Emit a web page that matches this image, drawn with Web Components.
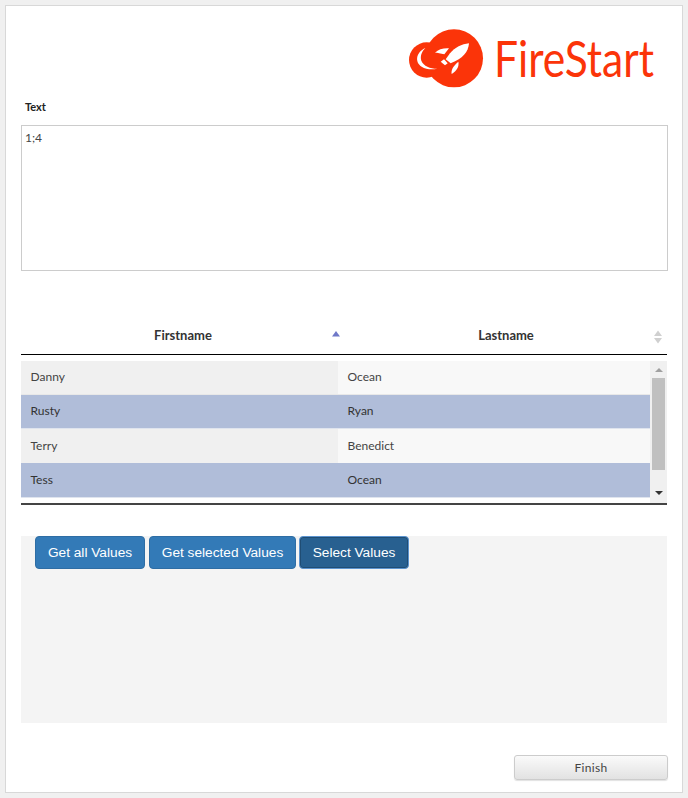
<!DOCTYPE html>
<html>
<head>
<meta charset="utf-8">
<title>FireStart</title>
<style>
  html, body { margin: 0; padding: 0; background: #f0f0f0; }
  body { padding: 5px; font-family: Lato, "Liberation Sans", sans-serif; color: #333; }
</style>
</head>
<body>

<template id="fs-logo-tpl">
  <style>
    :host { display: flex; justify-content: flex-end; align-items: center; height: 75px; padding-right: 15px; }
    svg { width: 90px; height: 75px; display: block; }
    .name {
      width: 158px; height: 75px; margin-left: 4px; overflow: visible;
      font: 400 51px/75px Lato, sans-serif; color: #fb3409; white-space: nowrap;
      transform: scaleX(.835); transform-origin: left center;
    }
  </style>
  <svg viewBox="0 0 270 225">
    <circle cx="162" cy="115" r="87" fill="#fb3409"/>
    <circle cx="80" cy="120" r="53" fill="#fb3409"/>
    <path fill="#fff" d="M76 84C50 95 42 125 65 140C78 148 95 149 112 146C90 146 71 138 64 122C60 108 65 95 76 84Z"/>
    <path fill="#fff" d="M207 70C185 72 165 82 150 100L137 118L152 130C190 115 205 95 207 70Z"/>
    <path fill="#fff" d="M105 98C115 88 130 84 147 85L133 103C122 100 112 98 105 98Z"/>
    <path fill="#fff" d="M155 162C153 150 158 140 175 125C178 140 170 152 155 162Z"/>
    <path fill="#fff" d="M122 125L132 118L143 130L135 136Z"/>
  </svg>
  <div class="name">FireStart</div>
</template>

<template id="fs-textbox-tpl">
  <style>
    :host { display: block; }
    label { display: block; margin: 5px 0 0 4px; height: 25px; font: 700 11px/14px Lato, sans-serif; color: #222; }
    .box {
      box-sizing: border-box; height: 146px; width: 647px; border: 1px solid #ccc; background: #fff;
      padding: 5px 3px; font: 12px/14px Lato, sans-serif; color: #444;
    }
  </style>
  <label><slot name="label"></slot></label>
  <div class="box"><slot></slot></div>
</template>

<template id="fs-grid-tpl">
  <style>
    :host { display: block; width: 646px; margin-top: 45px; border-bottom: 2px solid #444; box-sizing: content-box; }
    .head { display: grid; grid-template-columns: 324px 322px; height: 38px; border-bottom: 1px solid #000; }
    .body { display: flex; margin-top: 6px; height: 142px; }
    .rows { flex: 1; min-width: 0; }
    .bar { width: 17px; background: #f0f0f0; display: flex; flex-direction: column; align-items: center; }
    .arrow { width: 0; height: 0; border-left: 4px solid transparent; border-right: 4px solid transparent; }
    .up { margin-top: 7px; border-bottom: 4px solid #a0a0a0; }
    .thumb { width: 13px; height: 92px; margin-top: 6px; background: #c0c0c0; }
    .down { margin-top: 21px; border-top: 4px solid #333; }
  </style>
  <div class="head"><slot name="head"></slot></div>
  <div class="body">
    <div class="rows"><slot></slot></div>
    <div class="bar"><i class="arrow up"></i><i class="thumb"></i><i class="arrow down"></i></div>
  </div>
</template>

<template id="fs-grid-head-tpl">
  <style>
    :host { display: flex; position: relative; align-items: center; justify-content: center; font: 700 13px/14px Lato, sans-serif; color: #333; }
    svg { position: absolute; right: 4px; top: 11px; width: 10px; height: 20px; }
  </style>
  <slot></slot>
  <svg viewBox="0 0 10 20"></svg>
</template>

<template id="fs-grid-row-tpl">
  <style>
    :host { display: grid; grid-template-columns: 317px 312px; height: 34px; font: 12px/var(--lh, 32px) Lato, sans-serif; color: #444; }
    div { box-sizing: border-box; padding-left: 9.5px; border-bottom: 1px solid #e8e8e8; }
    .a { background: #f0f0f0; }
    .b { background: #f8f8f8; }
    :host([selected]) { color: #333; }
    :host([selected]) div { background: #b0bdd9; border-bottom-color: #dfe4ee; }
  </style>
  <div class="a"><slot name="first"></slot></div>
  <div class="b"><slot name="last"></slot></div>
</template>

<template id="fs-panel-tpl">
  <style>
    :host { display: flex; align-items: flex-start; gap: 4px; box-sizing: border-box; width: 646px; height: 187px; margin-top: 31px; padding-left: 14px; background: #f4f4f4; }
  </style>
  <slot></slot>
</template>

<template id="fs-button-tpl">
  <style>
    :host { display: block; }
    :host([active]) { margin-left: -1px; }
    button {
      box-sizing: border-box; display: block; height: 33px; padding: 0; width: var(--w, 110px); border: 1px solid #2e6da4; border-radius: 4px;
      background: #337ab7; color: #fff; font: 13.7px/20px "Liberation Sans", Arial, sans-serif;
    }
    :host([active]) button { background: #286090; border-color: #5b93cf; box-shadow: inset 0 0 0 1px #204d74; }
  </style>
  <button><slot></slot></button>
</template>

<template id="fs-finish-tpl">
  <style>
    :host { display: block; align-self: flex-end; margin: 32px -1px 0 0; }
    button {
      box-sizing: border-box; display: block; width: 154px; height: 25px; padding: 0; border: 1px solid #ccc; border-radius: 3px;
      background: linear-gradient(#fafafa, #e2e2e2); color: #444; font: 12px/14px Lato, sans-serif; letter-spacing: .3px;
      box-shadow: 0 1px 1px rgba(0,0,0,.12);
    }
  </style>
  <button><slot></slot></button>
</template>

<template id="fs-card-tpl">
  <style>
    :host { display: flex; flex-direction: column; box-sizing: border-box; width: 678px; height: 788px; padding: 14px 15px 0; background: #fff; border: 1px solid #d8d8d8; }
  </style>
  <slot></slot>
</template>

<fs-card>
  <fs-logo></fs-logo>
  <fs-textbox><span slot="label">Text</span>1;4</fs-textbox>
  <fs-grid>
    <fs-grid-head slot="head" sort="asc">Firstname</fs-grid-head>
    <fs-grid-head slot="head">Lastname</fs-grid-head>
    <fs-grid-row><span slot="first">Danny</span><span slot="last">Ocean</span></fs-grid-row>
    <fs-grid-row selected><span slot="first">Rusty</span><span slot="last">Ryan</span></fs-grid-row>
    <fs-grid-row style="--lh: 34px"><span slot="first">Terry</span><span slot="last">Benedict</span></fs-grid-row>
    <fs-grid-row selected style="--lh: 34px"><span slot="first">Tess</span><span slot="last">Ocean</span></fs-grid-row>
  </fs-grid>
  <fs-panel>
    <fs-button>Get all Values</fs-button>
    <fs-button style="--w: 147px">Get selected Values</fs-button>
    <fs-button active>Select Values</fs-button>
  </fs-panel>
  <fs-finish>Finish</fs-finish>
</fs-card>

<script>
  (() => {
    /* plain elements: shadow root from their template and nothing else */
    const define = (name, extra) => {
      const template = document.getElementById(name + '-tpl');
      customElements.define(name, class extends HTMLElement {
        constructor() {
          super();
          this.attachShadow({mode: 'open'}).appendChild(template.content.cloneNode(true));
        }
        connectedCallback() {
          if (extra) extra(this);
        }
      });
    };

    ['fs-card', 'fs-logo', 'fs-textbox', 'fs-grid', 'fs-grid-row', 'fs-panel', 'fs-button', 'fs-finish']
      .forEach(name => define(name));

    /* sort arrows: blue up arrow when sorted, two grey ones otherwise */
    define('fs-grid-head', el => {
      el.shadowRoot.querySelector('svg').innerHTML = el.getAttribute('sort') === 'asc'
        ? '<path d="M1 9.500L5 4L9 9.500Z" fill="#6f78c8"/>'
        : '<path d="M1 9L5 3.500L9 9Z M1 11L5 16.500L9 11Z" fill="#d0d0d0"/>';
    });
  })();
</script>
</body>
</html>
